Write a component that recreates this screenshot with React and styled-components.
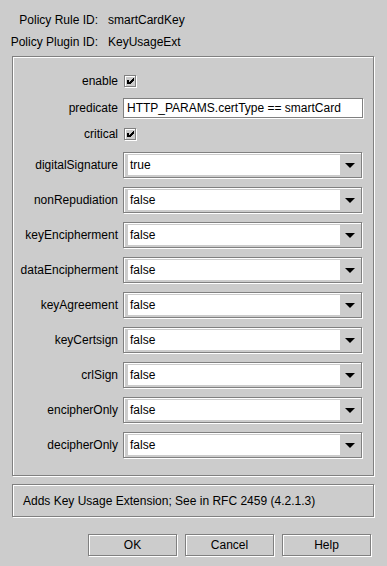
import React from "react";
import styled, { createGlobalStyle } from "styled-components";

const GlobalStyle = createGlobalStyle`
  html, body {
    margin: 0;
    padding: 0;
    background: #cccccc;
  }
  body {
    font-family: "Liberation Sans", Arial, sans-serif;
    font-size: 12px;
    color: #000;
  }
  * { box-sizing: border-box; }
`;

const Window = styled.div`
  width: 387px;
  height: 566px;
  background: #cccccc;
  display: flex;
  flex-direction: column;
  overflow: hidden;
`;

const Header = styled.div`
  display: grid;
  grid-template-columns: 85px auto;
  column-gap: 10px;
  row-gap: 8px;
  padding: 13px 0 0 13px;
  line-height: 14px;
`;

const HeaderLabel = styled.div`
  display: flex;
  justify-content: flex-end;
  white-space: nowrap;
`;

const HeaderValue = styled.div`
  white-space: nowrap;
`;

const etched = `
  border: 1px solid #808080;
  box-shadow: inset 1px 1px 0 #ffffff, 1px 1px 0 #ffffff;
`;

const Panel = styled.div`
  margin: 7px 0 0 12px;
  width: 362px;
  height: 420px;
  ${etched}
  display: flex;
  flex-direction: column;
`;

const FormRow = styled.div`
  display: grid;
  grid-template-columns: 105px 1fr;
  column-gap: 5px;
  align-items: center;
  height: ${(p) => p.$h}px;
  margin-top: ${(p) => p.$mt}px;
`;

const Label = styled.div`
  text-align: right;
  white-space: nowrap;
  line-height: 14px;
`;

const CheckBox = styled.div`
  width: 12px;
  height: 12px;
  margin-left: 1px;
  background: #cccccc;
  ${etched}
  position: relative;
  svg {
    position: absolute;
    left: -1px;
    top: -1px;
  }
`;

const TextField = styled.div`
  width: 240px;
  height: 20px;
  background: #ffffff;
  border: 1px solid #808080;
  box-shadow: 1px 1px 0 #ffffff;
  padding-left: 3px;
  line-height: 18px;
  white-space: nowrap;
`;

const Select = styled.div`
  width: 239px;
  height: 26px;
  display: flex;
  ${etched}
  background: #cccccc;
  padding: 2px 1px 2px 4px;
`;

const SelectValue = styled.div`
  flex: 1;
  background: #ffffff;
  padding-left: 2px;
  line-height: 20px;
`;

const ArrowArea = styled.div`
  width: 20px;
  display: flex;
  align-items: center;
  justify-content: center;
`;

const Triangle = styled.div`
  width: 0;
  height: 0;
  border-left: 5px solid transparent;
  border-right: 5px solid transparent;
  border-top: 5px solid #000;
`;

const Description = styled.div`
  margin: 8px 0 0 12px;
  width: 362px;
  height: 33px;
  ${etched}
  display: flex;
  align-items: center;
  padding-left: 10px;
  white-space: nowrap;
`;

const ButtonRow = styled.div`
  display: flex;
  justify-content: flex-end;
  gap: 8px;
  padding-right: 16px;
  margin-top: 17px;
`;

const Button = styled.div`
  width: 89px;
  height: 22px;
  ${etched}
  display: flex;
  align-items: center;
  justify-content: center;
`;

const Check = () => (
  <svg width="13" height="13" viewBox="0 0 13 13" shapeRendering="crispEdges">
    <rect x="3" y="5" width="2" height="4" fill="#000" />
    <polygon points="5,7 9,3 10,3 10,5 6,9 5,9" fill="#000" />
  </svg>
);

const selects = [
  ["digitalSignature", "true"],
  ["nonRepudiation", "false"],
  ["keyEncipherment", "false"],
  ["dataEncipherment", "false"],
  ["keyAgreement", "false"],
  ["keyCertsign", "false"],
  ["crlSign", "false"],
  ["encipherOnly", "false"],
  ["decipherOnly", "false"],
];

export default function App() {
  return (
    <Window>
      <GlobalStyle />
      <Header>
        <HeaderLabel>Policy Rule ID:</HeaderLabel>
        <HeaderValue>smartCardKey</HeaderValue>
        <HeaderLabel>Policy Plugin ID:</HeaderLabel>
        <HeaderValue>KeyUsageExt</HeaderValue>
      </Header>
      <Panel>
        <FormRow $h={13} $mt={17}>
          <Label>enable</Label>
          <CheckBox>
            <Check />
          </CheckBox>
        </FormRow>
        <FormRow $h={21} $mt={10}>
          <Label>predicate</Label>
          <TextField>HTTP_PARAMS.certType == smartCard</TextField>
        </FormRow>
        <FormRow $h={13} $mt={9}>
          <Label>critical</Label>
          <CheckBox>
            <Check />
          </CheckBox>
        </FormRow>
        {selects.map(([name, val], i) => (
          <FormRow key={name} $h={26} $mt={i === 0 ? 12 : 9}>
            <Label>{name}</Label>
            <Select>
              <SelectValue>{val}</SelectValue>
              <ArrowArea>
                <Triangle />
              </ArrowArea>
            </Select>
          </FormRow>
        ))}
      </Panel>
      <Description>Adds Key Usage Extension; See in RFC 2459 (4.2.1.3)</Description>
      <ButtonRow>
        <Button>OK</Button>
        <Button>Cancel</Button>
        <Button>Help</Button>
      </ButtonRow>
    </Window>
  );
}
